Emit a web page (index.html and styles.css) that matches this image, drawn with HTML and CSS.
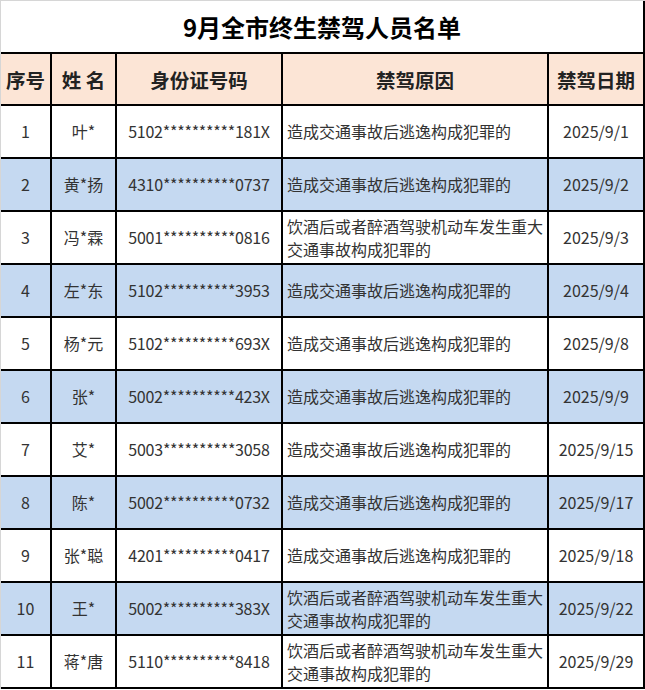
FILE: index.html
```html
<!DOCTYPE html>
<html lang="zh-CN">
<head>
<meta charset="utf-8">
<title>9月全市终生禁驾人员名单</title>
<link rel="stylesheet" href="styles.css">
</head>
<body>
<div class="sheet">
  <div class="title">9月全市终生禁驾人员名单</div>
  <div class="grid">
    <div class="row head">
      <div class="cell">序号</div>
      <div class="cell">姓&nbsp;名</div>
      <div class="cell">身份证号码</div>
      <div class="cell">禁驾原因</div>
      <div class="cell">禁驾日期</div>
    </div>
    <div class="row">
      <div class="cell">1</div>
      <div class="cell">叶*</div>
      <div class="cell id">5102**********181X</div>
      <div class="cell reason">造成交通事故后逃逸构成犯罪的</div>
      <div class="cell">2025/9/1</div>
    </div>
    <div class="row alt">
      <div class="cell">2</div>
      <div class="cell">黄*扬</div>
      <div class="cell id">4310**********0737</div>
      <div class="cell reason">造成交通事故后逃逸构成犯罪的</div>
      <div class="cell">2025/9/2</div>
    </div>
    <div class="row">
      <div class="cell">3</div>
      <div class="cell">冯*霖</div>
      <div class="cell id">5001**********0816</div>
      <div class="cell reason">饮酒后或者醉酒驾驶机动车发生重大交通事故构成犯罪的</div>
      <div class="cell">2025/9/3</div>
    </div>
    <div class="row alt">
      <div class="cell">4</div>
      <div class="cell">左*东</div>
      <div class="cell id">5102**********3953</div>
      <div class="cell reason">造成交通事故后逃逸构成犯罪的</div>
      <div class="cell">2025/9/4</div>
    </div>
    <div class="row">
      <div class="cell">5</div>
      <div class="cell">杨*元</div>
      <div class="cell id">5102**********693X</div>
      <div class="cell reason">造成交通事故后逃逸构成犯罪的</div>
      <div class="cell">2025/9/8</div>
    </div>
    <div class="row alt">
      <div class="cell">6</div>
      <div class="cell">张*</div>
      <div class="cell id">5002**********423X</div>
      <div class="cell reason">造成交通事故后逃逸构成犯罪的</div>
      <div class="cell">2025/9/9</div>
    </div>
    <div class="row">
      <div class="cell">7</div>
      <div class="cell">艾*</div>
      <div class="cell id">5003**********3058</div>
      <div class="cell reason">造成交通事故后逃逸构成犯罪的</div>
      <div class="cell">2025/9/15</div>
    </div>
    <div class="row alt">
      <div class="cell">8</div>
      <div class="cell">陈*</div>
      <div class="cell id">5002**********0732</div>
      <div class="cell reason">造成交通事故后逃逸构成犯罪的</div>
      <div class="cell">2025/9/17</div>
    </div>
    <div class="row">
      <div class="cell">9</div>
      <div class="cell">张*聪</div>
      <div class="cell id">4201**********0417</div>
      <div class="cell reason">造成交通事故后逃逸构成犯罪的</div>
      <div class="cell">2025/9/18</div>
    </div>
    <div class="row alt">
      <div class="cell">10</div>
      <div class="cell">王*</div>
      <div class="cell id">5002**********383X</div>
      <div class="cell reason">饮酒后或者醉酒驾驶机动车发生重大交通事故构成犯罪的</div>
      <div class="cell">2025/9/22</div>
    </div>
    <div class="row">
      <div class="cell">11</div>
      <div class="cell">蒋*唐</div>
      <div class="cell id">5110**********8418</div>
      <div class="cell reason">饮酒后或者醉酒驾驶机动车发生重大交通事故构成犯罪的</div>
      <div class="cell">2025/9/29</div>
    </div>
  </div>
</div>
</body>
</html>
```

FILE: styles.css
```css
html, body {
  margin: 0;
  padding: 0;
  background: #ffffff;
}

body {
  font-family: "Noto Sans CJK SC", "Noto Sans", sans-serif;
  color: #333333;
}

.sheet {
  width: 645px;
  box-sizing: border-box;
  border-top: 1px solid #d6d6d6;
  border-left: 1px solid #d6d6d6;
}

.title {
  height: 51px;
  box-sizing: border-box;
  border-right: 2px solid #000;
  display: flex;
  align-items: center;
  justify-content: center;
  font-size: 24px;
  font-weight: 700;
  color: #000;
}

.grid {
  display: grid;
  grid-template-columns: 49px 63px 164px 264px 94px;
  grid-template-rows: 50px repeat(11, 51px);
  gap: 2px;
  padding: 2px 2px 2px 0;
  background: #000;
}

.row {
  display: contents;
}

.cell {
  background: #ffffff;
  display: flex;
  align-items: center;
  justify-content: center;
  font-size: 16px;
  line-height: 23px;
  white-space: nowrap;
}

.row.alt .cell {
  background: #c5d9f1;
}

.row.head .cell {
  background: #fce5d6;
  font-size: 19.5px;
  font-weight: 700;
  color: #222222;
}

.cell.id {
  letter-spacing: -0.25px;
}

.cell.reason {
  justify-content: flex-start;
  padding-left: 4px;
  white-space: normal;
}
```
